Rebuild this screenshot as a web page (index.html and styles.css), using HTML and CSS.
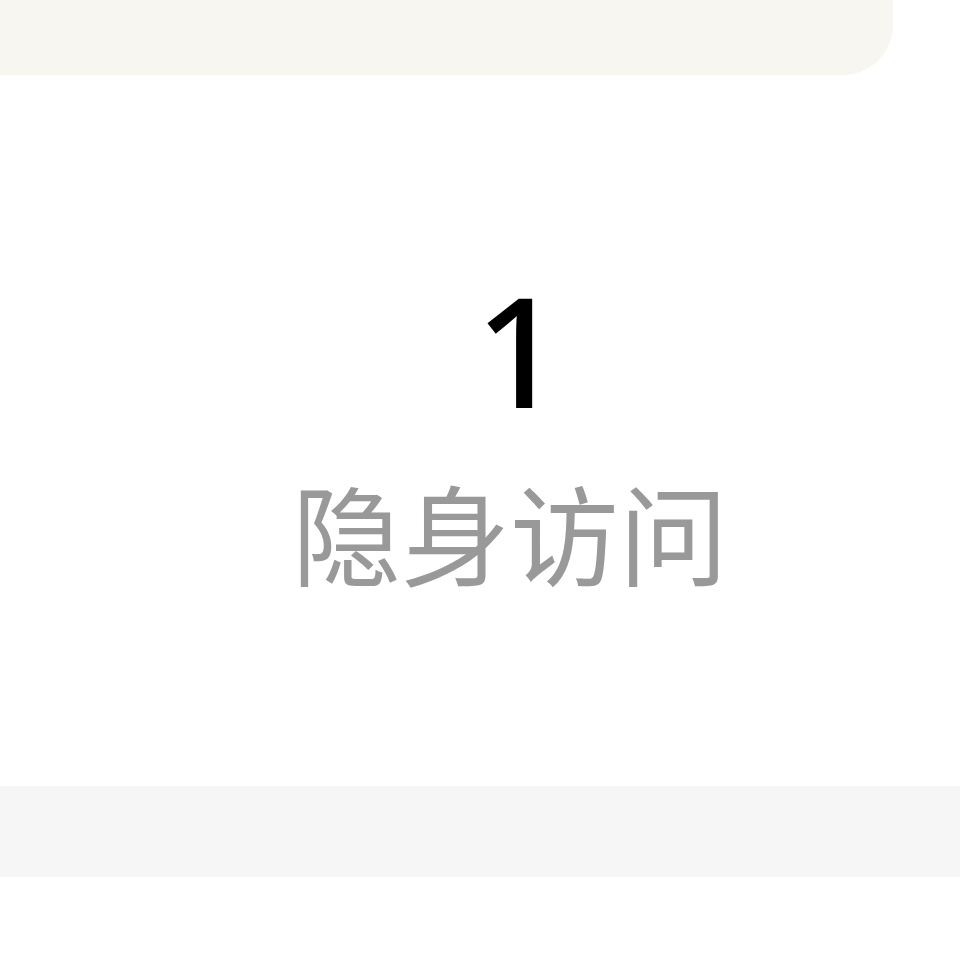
FILE: index.html
```html
<!DOCTYPE html>
<html lang="zh-CN">
<head>
<meta charset="utf-8">
<link rel="stylesheet" href="styles.css">
</head>
<body>
<div class="page">
  <div class="top-card"></div>
  <section class="stats">
    <div class="stat">
      <div class="stat-num">1</div>
      <div class="stat-label">隐身访问</div>
    </div>
  </section>
  <div class="divider-band"></div>
</div>
</body>
</html>
```
FILE: styles.css
```css
html, body {
  margin: 0;
  padding: 0;
  background: #ffffff;
}
.page {
  width: 960px;
  height: 963px;
  overflow: hidden;
  font-family: "Noto Sans", "Noto Sans CJK SC", sans-serif;
}
.top-card {
  width: 893px;
  height: 75px;
  background: #f8f6f1;
  border-bottom-right-radius: 50px;
}
.stats {
  height: 711px;
  padding-left: 60px;
  display: flex;
  justify-content: center;
  box-sizing: border-box;
}
.stat {
  display: flex;
  flex-direction: column;
  align-items: center;
  padding-top: 197px;
}
.stat-num {
  font-size: 153px;
  font-weight: 500;
  line-height: 1;
  color: #000000;
  padding-left: 18px;
}
.stat-label {
  margin-top: 51px;
  font-family: "Noto Sans CJK SC", sans-serif;
  font-size: 109px;
  line-height: 1;
  color: #999999;
}
.divider-band {
  height: 91px;
  background: #f6f6f6;
}
```
